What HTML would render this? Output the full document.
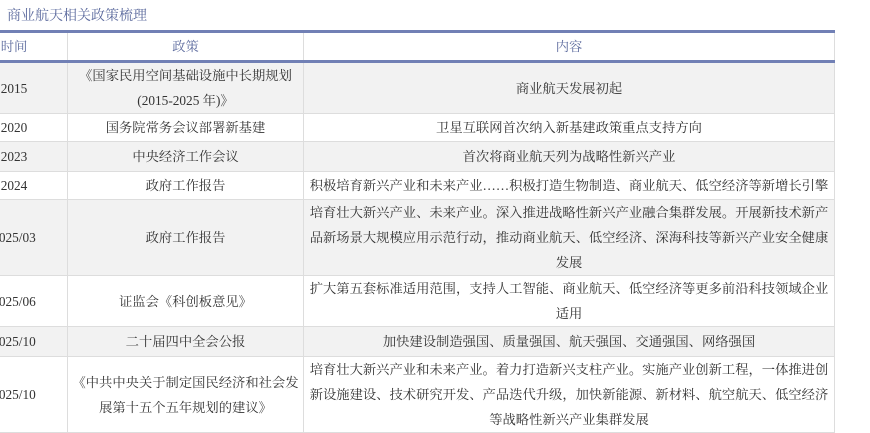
<!DOCTYPE html>
<html><head><meta charset="utf-8"><style>
body{margin:0;width:870px;height:422px;overflow:hidden;background:#fff;font-family:"Liberation Serif","Noto Serif CJK SC",serif;font-size:13.3px;color:#333}
.t{position:absolute;left:7px;top:6px;color:#5d6b9e;font-size:14px;line-height:22px}
table{position:absolute;left:-40px;top:30px;width:874px;border-collapse:collapse;table-layout:fixed}
td,th{border:1px solid #ddd;text-align:center;white-space:nowrap;padding:0;line-height:25px;font-weight:normal;overflow:visible}
th{color:#5d6b9e;height:27px;border-top:3px solid #7180b5;border-bottom:3px solid #7180b5}
tr.g td{background:#f2f2f2}
</style></head><body>
<div class="t">商业航天相关政策梳理</div>
<table>
<colgroup><col style="width:107px"><col style="width:236px"><col style="width:531px"></colgroup>
<tr><th style="width:107px">时间</th><th style="width:236px">政策</th><th style="width:531px">内容</th></tr>
<tr class="g" style="height:51px"><td>2015</td><td>《国家民用空间基础设施中长期规划<br>(2015-2025 年)》</td><td>商业航天发展初起</td></tr>
<tr style="height:28px"><td>2020</td><td>国务院常务会议部署新基建</td><td>卫星互联网首次纳入新基建政策重点支持方向</td></tr>
<tr class="g" style="height:30px"><td>2023</td><td>中央经济工作会议</td><td>首次将商业航天列为战略性新兴产业</td></tr>
<tr style="height:28px"><td>2024</td><td>政府工作报告</td><td>积极培育新兴产业和未来产业……积极打造生物制造、商业航天、低空经济等新增长引擎</td></tr>
<tr class="g" style="height:76px"><td>2025/03</td><td>政府工作报告</td><td>培育壮大新兴产业、未来产业。深入推进战略性新兴产业融合集群发展。开展新技术新产<br>品新场景大规模应用示范行动，推动商业航天、低空经济、深海科技等新兴产业安全健康<br>发展</td></tr>
<tr style="height:50px"><td>2025/06</td><td>证监会《科创板意见》</td><td>扩大第五套标准适用范围，支持人工智能、商业航天、低空经济等更多前沿科技领域企业<br>适用</td></tr>
<tr class="g" style="height:30px"><td>2025/10</td><td>二十届四中全会公报</td><td>加快建设制造强国、质量强国、航天强国、交通强国、网络强国</td></tr>
<tr style="height:76px"><td>2025/10</td><td>《中共中央关于制定国民经济和社会发<br>展第十五个五年规划的建议》</td><td>培育壮大新兴产业和未来产业。着力打造新兴支柱产业。实施产业创新工程，一体推进创<br>新设施建设、技术研究开发、产品迭代升级，加快新能源、新材料、航空航天、低空经济<br>等战略性新兴产业集群发展</td></tr>
</table>
</body></html>
